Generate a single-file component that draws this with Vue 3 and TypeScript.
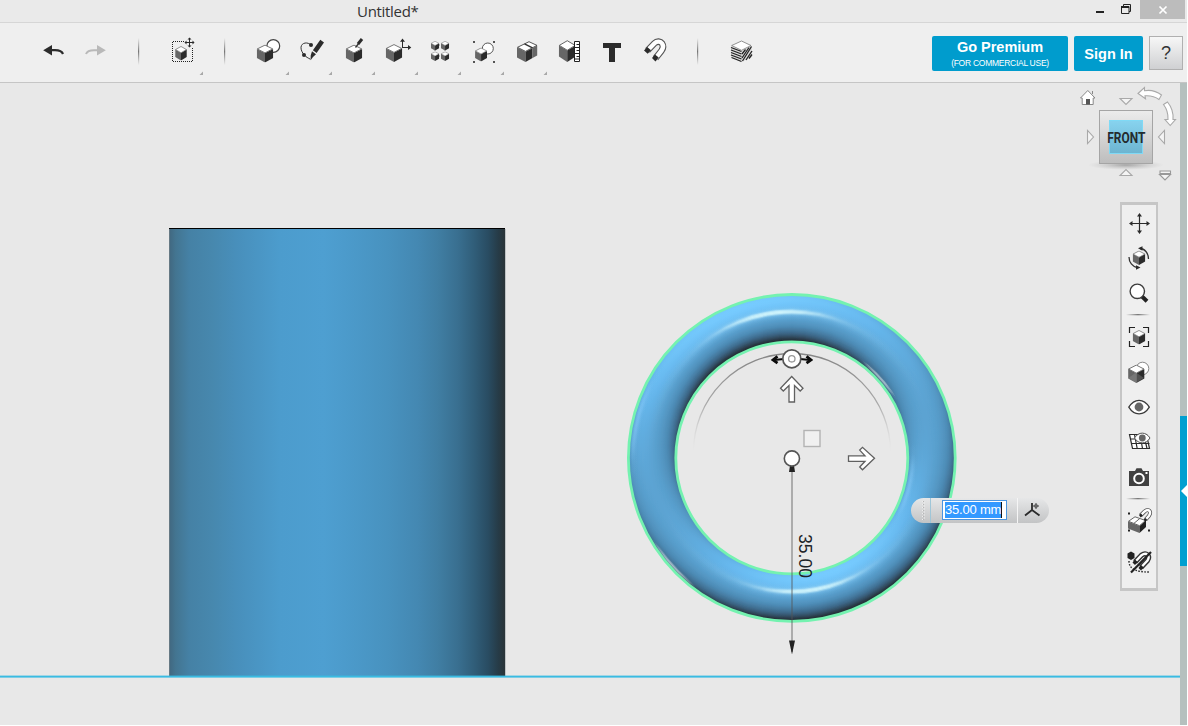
<script setup lang="ts">
interface Slot { id: string; x: number; menu?: boolean }
interface NavItem { id: string; y: number; h: number }
interface Stop { o: number; c: string; a: number }
interface Ring { id: string; r: number; x1: number; y1: number; x2: number; y2: number; stops: Stop[] }

const slots: Slot[] = [
  { id: 'undo', x: 32 }, { id: 'redo', x: 75 }, { id: 'sep', x: 118 },
  { id: 'select', x: 161, menu: true }, { id: 'sep', x: 204 },
  { id: 'primitives', x: 247, menu: true }, { id: 'sketch', x: 290, menu: true },
  { id: 'construct', x: 333, menu: true }, { id: 'modify', x: 376, menu: true },
  { id: 'pattern', x: 419, menu: true }, { id: 'group', x: 462, menu: true },
  { id: 'combine', x: 505, menu: true }, { id: 'measure', x: 548 },
  { id: 'text', x: 591 }, { id: 'snap', x: 634 }, { id: 'sep', x: 677 }, { id: 'material', x: 720 },
]

const navItems: NavItem[] = [
  { id: 'pan', y: 205, h: 36 }, { id: 'orbit', y: 241, h: 35 }, { id: 'zoom', y: 276, h: 35 },
  { id: 'sep', y: 311, h: 8 }, { id: 'fit', y: 319, h: 36 }, { id: 'shade', y: 355, h: 34 },
  { id: 'eye', y: 389, h: 36 }, { id: 'grid', y: 425, h: 34 }, { id: 'camera', y: 459, h: 36 },
  { id: 'sep', y: 495, h: 8 }, { id: 'snapgroup', y: 503, h: 38 }, { id: 'nosnap', y: 541, h: 42 },
]

// Torus shading: concentric rings, each lit through a gradient along the light axis.
const CX = 791.8, CY = 457.9, MID = 139.8, TUBE = 24
type RGB = [number, number, number]
const ramp: [number, RGB][] = [
  [-1, [26, 27, 29]], [-0.6, [33, 37, 41]], [-0.35, [42, 58, 71]], [0, [61, 105, 138]],
  [0.3, [77, 139, 181]], [0.6, [91, 163, 210]], [0.8, [102, 183, 237]], [1, [118, 203, 255]],
]
function rampColor(d: number): string {
  for (let i = 1; i < ramp.length; i++) {
    const [b, cb] = ramp[i]
    const [a, ca] = ramp[i - 1]
    if (d <= b || i === ramp.length - 1) {
      const t = Math.max(0, Math.min(1, (d - a) / (b - a)))
      return `rgb(${ca.map((v, k) => Math.round(v + (cb[k] - v) * t)).join(',')})`
    }
  }
  return '#5ca7d7'
}
function buildRings(name: string, axis: [number, number], shade: (s: number, z: number, c: number) => Omit<Stop, 'o'>, n = 20): Ring[] {
  const out: Ring[] = []
  const len = Math.hypot(axis[0], axis[1])
  const ux = axis[0] / len, uy = axis[1] / len
  for (let i = 47; i >= 0; i--) {
    const r = MID - TUBE + 0.5 + i
    const s = (r - MID) / TUBE
    const z = Math.sqrt(Math.max(0, 1 - s * s))
    const stops: Stop[] = []
    for (let k = 0; k <= n; k++) {
      const c = -1 + (2 * k) / n
      stops.push({ o: k / n, ...shade(s, z, c) })
    }
    out.push({ id: `${name}${i}`, r, x1: CX - ux * r, y1: CY - uy * r, x2: CX + ux * r, y2: CY + uy * r, stops })
  }
  return out
}
const bodyRings = buildRings('d', [-0.3, -0.954], (s, z, c) => ({ c: rampColor(s * c * 0.8 + z * 0.6), a: 1 }))
const glossRings: Ring[] = [
  ...buildRings('h', [-0.13, -0.99], (s, z, c) => {
    const d = Math.max(0, s * c * 0.26 + z * 0.9656)
    const side = Math.min(1, Math.abs(c) * 1.1)
    return { c: '#e2ffff', a: Math.min(1, Math.pow(d, 360) * 1.2 * side + Math.pow(d, 60) * 0.14 * side) }
  }, 60),
  ...buildRings('g', [-0.74, 0.67], (s, z, c) => {
    const d = Math.max(0, s * c * 0.87 + z * 0.49)
    return { c: '#ffffff', a: Math.min(1, Math.pow(d, 420) * 1.6) }
  }, 120),
  ...buildRings('k', [-0.97, -0.24], (s, z, c) => {
    const d = Math.max(0, s * c * 0.8 + z * 0.6)
    return { c: '#8ccfff', a: Math.pow(d, 90) * 0.5 }
  }, 60),
]
const allRings = [...bodyRings, ...glossRings]
const annulus = [163.6, 116].map(r => `M${CX - r} ${CY}a${r} ${r} 0 1 0 ${2 * r} 0a${r} ${r} 0 1 0 ${-2 * r} 0z`).join('')
</script>

<template>
  <div class="app">
    <svg class="defs" width="0" height="0">
      <symbol id="cube" viewBox="0 0 17 18" preserveAspectRatio="none">
        <path d="M.4 4.4 8.5 8.6V18L.4 13.6Z" fill="#666" />
        <path d="M16.6 4.4 8.5 8.6V18l8.1-4.4Z" fill="#2b2b2b" />
        <path d="M8.5.6 16.2 4.4 8.5 8.4.8 4.4Z" fill="#fff" stroke="#555" stroke-width=".8" />
      </symbol>
      <linearGradient id="sepV" x1="0" y1="0" x2="0" y2="1">
        <stop offset="0" stop-color="#777" stop-opacity="0" /><stop offset=".5" stop-color="#777" /><stop offset="1" stop-color="#777" stop-opacity="0" />
      </linearGradient>
      <linearGradient id="sepH" x1="0" y1="0" x2="1" y2="0">
        <stop offset="0" stop-color="#777" stop-opacity="0" /><stop offset=".5" stop-color="#777" /><stop offset="1" stop-color="#777" stop-opacity="0" />
      </linearGradient>
    </svg>

    <header class="titlebar">
      <span class="title">Untitled*</span>
      <div class="winbtns">
        <svg width="54" height="20" viewBox="1086 0 54 20">
          <path d="M1096 11h8v2h-8z" fill="#222" />
          <path d="M1123.500 6V4.500h7v7H1129" fill="none" stroke="#222" />
          <path d="M1121.500 6.500h7.500v7h-7.500z" fill="none" stroke="#222" /><path d="M1121 6h8v2h-8z" fill="#222" />
        </svg>
        <div class="close">
          <svg width="10" height="10" viewBox="0 0 10 10"><path d="M1.500 1.500l7 7M8.500 1.500l-7 7" stroke="#fff" stroke-width="1.700" /></svg>
        </div>
      </div>
    </header>

    <div class="toolbar">
      <nav class="tools">
        <svg v-for="s in slots" :key="s.id + s.x" width="43" height="59" :viewBox="`${s.x} 23 43 59`">
          <path v-if="s.menu" :d="`M${s.x + 42} 71.500v3.500h-3.500z`" fill="#a8a8a8" />
          <rect v-if="s.id === 'sep'" :x="s.x + 20" y="38" width="1.200" height="27" fill="url(#sepV)" />
          <g v-else-if="s.id === 'undo'">
            <path d="M43.200 50.300 52 45v10.600z" fill="#2b2b2b" /><path d="M51 50.200h4c4 0 7 1.200 8 3.800" fill="none" stroke="#2b2b2b" stroke-width="2.200" />
          </g>
          <g v-else-if="s.id === 'redo'">
            <path d="M105.800 50.300 97 45v10.600z" fill="#b9b9b9" /><path d="M98 50.200h-4c-4 0-7 1.200-8 3.800" fill="none" stroke="#b9b9b9" stroke-width="2" />
          </g>
          <g v-else-if="s.id === 'select'">
            <path d="M184 41.500H172.500V61.500H192.500V48" fill="none" stroke="#222" stroke-dasharray="1 1" />
            <use href="#cube" x="175" y="46" width="12" height="14.500" />
            <path d="M189.500 38.500v8M185.500 42.500h8" stroke="#2b2b2b" />
            <path d="M189.500 37.500l2 2h-4zM189.500 47.500l2-2h-4zM184.500 42.500l2-2v4zM194.500 42.500l-2-2v4z" fill="#2b2b2b" />
          </g>
          <g v-else-if="s.id === 'primitives'">
            <circle cx="273.300" cy="46" r="6.400" fill="#fff" stroke="#444" stroke-width="1.200" /><use href="#cube" x="256.500" y="44.500" width="17" height="18" />
          </g>
          <g v-else-if="s.id === 'sketch'">
            <path d="M311 45.200c-3-3.600-9.500-2.800-10 2-.2 2.600 1.300 5.600 3.300 7.800 1.500 2 4 3 6 4.200" fill="none" stroke="#333" />
            <circle cx="311" cy="45" r="2" fill="#2b2b2b" /><circle cx="304" cy="55" r="2" fill="#2b2b2b" />
            <path d="M320.300 39.800 324 42.600 316.600 52.900 312.900 50.200zM312 51.200l4 3-3 2.700-2.400 3.300.1-4.600z" fill="#2b2b2b" />
          </g>
          <g v-else-if="s.id === 'construct'">
            <use href="#cube" x="345.500" y="44.500" width="17" height="18" /><path d="M355.500 47.500l3.500-4.500" stroke="#333" stroke-width="1.300" /><path d="M358 44l4-5" stroke="#2b2b2b" stroke-width="3" />
          </g>
          <g v-else-if="s.id === 'modify'">
            <use href="#cube" x="385.500" y="44" width="17" height="18" />
            <path d="M402.500 48V40M402.500 47.500H409" fill="none" stroke="#2b2b2b" /><path d="M402.500 38.500l2.500 3.300h-5zM411.300 47.500l-3.300-2.500v5z" fill="#2b2b2b" />
          </g>
          <g v-else-if="s.id === 'pattern'">
            <path d="M435 50v3M445 50v3M439 45h2M439 56h2" stroke="#888" stroke-dasharray="1 1" />
            <use href="#cube" x="430.800" y="41" width="8.500" height="9.500" /><use href="#cube" x="440.800" y="41" width="8.500" height="9.500" />
            <use href="#cube" x="430.800" y="51.500" width="8.500" height="9.500" /><use href="#cube" x="440.800" y="51.500" width="8.500" height="9.500" />
          </g>
          <g v-else-if="s.id === 'group'">
            <path d="M473 41h2v2h-2zM493 41h2v2h-2zM473 61h2v2h-2zM493 61h2v2h-2z" fill="#555" />
            <circle cx="487.800" cy="48.500" r="5.500" fill="#fff" stroke="#555" /><use href="#cube" x="474.800" y="47.500" width="12.500" height="14" />
          </g>
          <g v-else-if="s.id === 'combine'">
            <path d="M517 47.500l8.500 4.300V62l-8.500-4.500z" fill="#666" /><path d="M525.500 51.800l7-3.600v9.800l-7 4z" fill="#2b2b2b" /><path d="M532.500 48.200l4.700-2.700v10l-4.700 2.500z" fill="#666" />
            <path d="M517.500 47.300l11.500-5.600 8 3.700-11.500 6z" fill="#fff" stroke="#444" stroke-width=".9" /><path d="M524.500 43.800l8 4" fill="none" stroke="#333" stroke-width="1.300" />
          </g>
          <g v-else-if="s.id === 'measure'">
            <use href="#cube" x="558.500" y="40" width="17.500" height="22" />
            <path d="M574.500 41.500h5v20h-5z" fill="#fff" stroke="#222" /><path d="M576.500 44.500h3M575 47.500h4M576.500 50.500h3M575 53.500h4M576.500 56.500h3M575 59h4" stroke="#222" />
          </g>
          <path v-else-if="s.id === 'text'" d="M603 43h18v5h-6v14h-6v-14h-6z" fill="#2b2b2b" />
          <g v-else-if="s.id === 'snap'" fill="none">
            <path d="M647.500 50.500l7-7.200c2.500-2.600 6-2 7.600.2 1.500 2.200 1.200 4.600-.6 7.200l-6 7.600" stroke="#555" stroke-width="6.600" /><path d="M647.500 50.500l7-7.200c2.500-2.600 6-2 7.600.2 1.500 2.200 1.200 4.600-.6 7.200l-6 7.600" stroke="#fff" stroke-width="4.400" />
            <path d="M644 50.500l3.200-3.500 3.800 3.300-3.300 3.500zM652 58l3-3.500 3.700 3-3.200 4z" fill="#2b2b2b" />
          </g>
          <g v-else-if="s.id === 'material'" fill="none">
            <path d="M731 45.500l10.500 5v12l-10.500-5.500zM741.500 50.500l10.500-5v11.500l-10.500 5z" fill="#ddd" />
            <path d="M731 47.500l10.500 4M731 50l10.500 4M731 52.500l10.500 4M731 55l10.500 4M731.500 57.500l10 4" stroke="#222" stroke-width="1.300" />
            <path d="M742 54l3.500-4.500M742 58l7-10.500M742.500 61l9-14.500M746 60l6-9M749 58.500l3-4" stroke="#222" stroke-width="1.300" />
            <path d="M741.500 41 751 45.500l-9.500 4.800-9.800-4.800z" fill="#fff" stroke="#777" stroke-width=".8" />
          </g>
        </svg>
      </nav>
      <div class="actions">
        <button class="btn premium"><b>Go Premium</b><small>(FOR COMMERCIAL USE)</small></button>
        <button class="btn signin">Sign In</button>
        <button class="help">?</button>
      </div>
    </div>

    <main class="viewport">
      <svg class="scene" width="1180" height="643" viewBox="0 83 1180 643">
        <defs>
          <linearGradient id="cyl" x1="0" x2="1" y1="0" y2="0">
            <stop offset="0" stop-color="#41677f" /><stop offset=".02" stop-color="#437591" /><stop offset=".06" stop-color="#4581a5" />
            <stop offset=".13" stop-color="#4788ae" /><stop offset=".2" stop-color="#488fbb" /><stop offset=".33" stop-color="#4c9ccd" />
            <stop offset=".46" stop-color="#4e9fd1" /><stop offset=".55" stop-color="#4b99c9" /><stop offset=".65" stop-color="#4892bf" />
            <stop offset=".74" stop-color="#4488b2" /><stop offset=".8" stop-color="#407ea3" /><stop offset=".86" stop-color="#396f90" />
            <stop offset=".91" stop-color="#305d78" /><stop offset=".95" stop-color="#294c62" /><stop offset=".98" stop-color="#263b47" /><stop offset="1" stop-color="#2a3438" />
          </linearGradient>
          <linearGradient id="arcFade" gradientUnits="userSpaceOnUse" x1="0" y1="358" x2="0" y2="452">
            <stop offset="0" stop-color="#888" /><stop offset=".5" stop-color="#aaa" /><stop offset="1" stop-color="#ddd" stop-opacity="0" />
          </linearGradient>
          <linearGradient id="face" x1="0" y1="0" x2="0" y2="1"><stop offset="0" stop-color="#ececec" /><stop offset="1" stop-color="#bdbdbd" /></linearGradient>
          <linearGradient id="faceBlue" x1="0" y1="0" x2="0" y2="1"><stop offset="0" stop-color="#87d3ef" /><stop offset="1" stop-color="#6db4d0" /></linearGradient>
          <radialGradient id="shadow"><stop offset="0" stop-color="#777" stop-opacity=".6" /><stop offset="1" stop-color="#aaa" stop-opacity="0" /></radialGradient>
          <clipPath id="annulus"><path :d="annulus" clip-rule="evenodd" /></clipPath>
          <filter id="smooth" x="-5%" y="-5%" width="110%" height="110%"><feGaussianBlur stdDeviation=".6" /></filter>
          <linearGradient v-for="g in allRings" :id="g.id" :key="g.id" gradientUnits="userSpaceOnUse" :x1="g.x1" :y1="g.y1" :x2="g.x2" :y2="g.y2">
            <stop v-for="(p, k) in g.stops" :key="k" :offset="p.o" :stop-color="p.c" :stop-opacity="p.a" />
          </linearGradient>
        </defs>

        <rect x="169" y="228" width="336" height="448" fill="url(#cyl)" />
        <path d="M169.500 228v448" stroke="#667984" /><path d="M505.500 229v447" stroke="#bfc3c5" /><path d="M169 228.500h336" stroke="#000" />
        <rect x="0" y="675.600" width="1180" height="2" fill="#3abbe2" />

        <g clip-path="url(#annulus)">
          <g filter="url(#smooth)">
            <circle v-for="g in bodyRings" :key="g.id" :cx="CX" :cy="CY" :r="g.r + 0.5" :fill="`url(#${g.id})`" />
            <g fill="none" stroke-width="2" stroke-opacity=".62">
              <circle v-for="g in glossRings" :key="g.id" :cx="CX" :cy="CY" :r="g.r" :stroke="`url(#${g.id})`" />
            </g>
          </g>
        </g>
        <g fill="none" stroke="#74f2b0" stroke-width="2.800"><circle :cx="CX" :cy="CY" r="163.400" /><circle :cx="CX" :cy="CY" r="116" /></g>

        <path d="M693.500 452A98.500 98.500 0 0 1 890.500 452" fill="none" stroke="url(#arcFade)" stroke-width="1.300" />
        <g fill="none" stroke="#0c0c0c"><path d="M774 360l10-1M810 360l-10-1" stroke-width="2" /><path d="M777.500 356.300l-4.500 3.700 4.500 3.200M806.500 356.300l4.500 3.700-4.500 3.200" stroke-width="2.800" /></g>
        <circle cx="791.800" cy="358.800" r="9" fill="#fff" stroke="#555" stroke-width="1.700" /><circle cx="791.800" cy="358.800" r="3.200" fill="#fff" stroke="#999" stroke-width="1.300" />
        <path d="M791.700 376.500l11.300 11.700-2.800 2.800-5.700-5.500V402h-5.500v-16.500l-5.700 5.500-2.800-2.800z" fill="#fff" stroke="#606060" stroke-width="1.300" />
        <path d="M874.500 458.300l-12 11.500-2.800-2.800 5.300-5.700h-16.500v-5.500H865l-5.300-5.700 2.800-2.800z" fill="#fff" stroke="#606060" stroke-width="1.300" />
        <rect x="804" y="430.500" width="16" height="16" fill="#f0f0f0" stroke="#b3b3b3" stroke-width="1.400" />
        <path d="M792 470v182" stroke="#555" stroke-opacity=".45" stroke-width="1.800" />
        <path d="M790 465.500h4l1 6.500h-6zM789 640.500h6l-3 14z" fill="#222" />
        <circle cx="791.900" cy="458.500" r="7.600" fill="#fff" stroke="#555" stroke-width="1.600" />
        <text class="dim" transform="translate(799 534) rotate(90)" textLength="44" lengthAdjust="spacingAndGlyphs">35.00</text>

        <!-- orientation cube -->
        <ellipse cx="1126" cy="165" rx="38" ry="5" fill="url(#shadow)" />
        <rect x="1099.500" y="110.500" width="53" height="53" fill="url(#face)" stroke="#a5a5a5" />
        <rect x="1109.500" y="120.500" width="33" height="33" fill="url(#faceBlue)" stroke="#7fd9f5" />
        <text class="front" x="1107.300" y="142.700" textLength="38" lengthAdjust="spacingAndGlyphs">FRONT</text>
        <g fill="#f4f4f4" stroke="#a9a9a9" stroke-width="1.100">
          <path d="M1120 98.500h12l-6 6zM1120 175.500h12l-6-6zM1087.500 130.500v13l6-6.500zM1164.500 130.500v13l-6-6.500z" />
          <path d="M1159.500 174.500h11l-5.500 5.500zM1160 171h10.500v2.500H1160z" stroke="#999" />
          <path d="M1138 93.500l6.500-6v3.200c7-1.200 12.500.8 17 4.300l-2.500 4.500c-4-3-9-4-14-3.700l.5 3z" fill="#fff" />
          <path d="M1163.500 104.500l4-2.500c4.500 5.500 6 11.500 5.500 17.500h2.500l-5.300 6-5.200-6h3c.3-6-1-10.500-4.500-15z" fill="#fff" />
        </g>
        <path d="M1080.500 98l7.300-7.500 7.200 7.500h-1.800v6.500h-11V98z" fill="#fff" stroke="#888" /><path d="M1086 99h4v5.500h-4z" fill="#555" /><path d="M1092.500 91v3" stroke="#888" />
      </svg>

      <div class="pill">
        <svg class="grip" width="19" height="25" viewBox="911 498 19 25"><path d="M922.500 501v20M924.500 502.500v18" stroke="#eee" stroke-dasharray="1 2" /><path d="M923.500 501v20" stroke="#b5b5b5" stroke-dasharray="1 2" /></svg>
        <div class="field"><div class="box"><span class="sel">35.00 mm</span></div></div>
        <svg width="31" height="25" viewBox="1018 498 31 25"><path d="M1032 503v7l-7 5.500M1032 510l7.500 5.500" fill="none" stroke="#2b2b2b" stroke-width="1.800" /><path d="M1036 503v6M1033 506h6" stroke="#444" /><circle cx="1036" cy="506" r="1.700" fill="none" stroke="#555" stroke-width=".7" /></svg>
      </div>

      <aside class="navbar">
        <svg v-for="n in navItems" :key="n.id + n.y" width="34" :height="n.h" :viewBox="`1122 ${n.y} 34 ${n.h}`">
          <rect v-if="n.id === 'sep'" x="1126" :y="n.y + 3" width="24" height="1.300" fill="url(#sepH)" />
          <g v-else-if="n.id === 'pan'">
            <path d="M1139.500 215v17M1131 223.500h17" stroke="#2b2b2b" stroke-width="1.200" /><path d="M1139.500 213l2.500 3.500h-5zM1139.500 234l2.500-3.500h-5zM1129 223.500l3.500-2.500v5zM1150 223.500l-3.500-2.500v5z" fill="#2b2b2b" />
          </g>
          <g v-else-if="n.id === 'orbit'">
            <use href="#cube" x="1132.500" y="250.500" width="13" height="14.500" />
            <path d="M1140 248.500c4.500 0 8.500 4.500 8.500 10.500M1137 267.500c-4.500-1-8-5-8-10.500" fill="none" stroke="#333" stroke-width="1.300" /><path d="M1138 248.300l4.500-2v4.500zM1140.500 267.600l-4.500-2.300v4.500z" fill="#2b2b2b" />
          </g>
          <g v-else-if="n.id === 'zoom'">
            <path d="M1142 296.500l5 4.700" stroke="#222" stroke-width="4" /><circle cx="1137.300" cy="291.300" r="7.200" fill="#fff" stroke="#3c3c3c" stroke-width="1.400" />
          </g>
          <g v-else-if="n.id === 'fit'">
            <use href="#cube" x="1132.500" y="330" width="13" height="14.500" /><path d="M1129.500 333v-5.500h5.500M1143 327.500h5.500v5.500M1129.500 341v5.500h5.500M1143 346.500h5.500V341" fill="none" stroke="#222" stroke-width="1.200" />
          </g>
          <g v-else-if="n.id === 'shade'">
            <circle cx="1142.500" cy="368.500" r="6.300" fill="#fff" stroke="#888" /><use href="#cube" x="1127.800" y="364.500" width="17" height="18.500" />
            <path d="M1128.500 378l7.500-5.500 8 5.500-8 4.800z" fill="#999" opacity=".35" />
          </g>
          <g v-else-if="n.id === 'eye'">
            <path d="M1128.800 407.200c5.500-9.200 15-9.200 20.500 0-5.500 9-15 9-20.500 0z" fill="#fff" stroke="#3a3a3a" stroke-width="1.300" /><circle cx="1139" cy="407" r="4.400" fill="#666" />
          </g>
          <g v-else-if="n.id === 'grid'">
            <path d="M1129.500 434.500h17l3 14h-17zM1130.300 439h18M1131 443.500h18.500M1134.500 434.500l2.700 14M1140 434.500l2.500 14M1145 440l2 8.500" fill="#fff" stroke="#2b2b2b" stroke-width="1.200" />
            <path d="M1134.500 438c4-6.500 11.500-6.500 15.500 0-4 6.500-11.500 6.500-15.500 0z" fill="#fff" stroke="#555" /><circle cx="1142.300" cy="438" r="3.400" fill="#666" />
          </g>
          <g v-else-if="n.id === 'camera'">
            <path d="M1129 471h6l1.500-2.700h5L1143 471h6v15h-20z" fill="#404040" /><circle cx="1139" cy="478.500" r="4.800" fill="#404040" stroke="#fff" stroke-width="2" /><path d="M1145.500 472h2v2h-2z" fill="#fff" />
          </g>
          <g v-else-if="n.id === 'snapgroup'">
            <path d="M1128 512.500h2v2h-2zM1128 529.500h2v2h-2zM1148 529.500h2v2h-2z" fill="#222" />
            <path d="M1128 521.500l11.500 4.500v7l-11.500-4.500z" fill="#666" /><path d="M1139.500 526l6.500-6v7l-6.500 6z" fill="#222" /><path d="M1128.500 521.300l6.500-4.500 10.500 3.700-6 5.200z" fill="#fff" stroke="#555" stroke-width=".9" /><path d="M1134 523.300l6-5" stroke="#666" fill="none" />
            <path d="M1140.500 515.500l4-4c4.500-3.500 7 .5 4.500 4.200l-3.500 4" fill="none" stroke="#555" stroke-width="4" /><path d="M1140.500 515.500l4-4c4.500-3.500 7 .5 4.500 4.200l-3.500 4" fill="none" stroke="#fff" stroke-width="2.400" /><path d="M1139 515l2-1.500 1.700 2-2 2zM1143.700 519.500l2-1.500 1.500 2-2 1.800z" fill="#222" />
          </g>
          <g v-else>
            <path d="M1129 561c0 7 5 11 20 11" fill="none" stroke="#222" stroke-width="1.400" stroke-dasharray="1.500 1.500" />
            <path d="M1135 562l6.500-6.800c5-3.500 9 1 6 5.300l-6.500 7" fill="none" stroke="#333" stroke-width="5.200" /><path d="M1135 562l6.500-6.800c5-3.500 9 1 6 5.300l-6.500 7" fill="none" stroke="#fff" stroke-width="2.400" />
            <path d="M1132.500 562.500l2.500-3 2.700 2.500-2.700 3zM1138.500 568l2.500-3 2.700 2.500-2.700 3zM1127.500 553.500l3.500-2 3.500 2v4.500l-3.500 2-3.500-2z" fill="#222" />
            <path d="M1131 572.500l20-20.500" stroke="#222" stroke-width="2.200" />
          </g>
        </svg>
      </aside>

      <div class="edge">
        <div class="panel-tab"><svg width="7" height="14" viewBox="0 0 7 14"><path d="M7 1v12L1 7z" fill="#fff" /></svg></div>
      </div>
    </main>
  </div>
</template>

<style>
body { background: #fff; }
</style>

<style scoped>
.app { width: 1187px; height: 725px; overflow: hidden; background: #e8e8e8; font-family: "Liberation Sans", Arial, sans-serif; display: flex; flex-direction: column; }
.defs { position: absolute; }
svg { display: block; flex: none; }
.titlebar { height: 22px; background: #eaeaea; border-bottom: 1px solid #d6d6d6; display: flex; justify-content: space-between; flex: none; }
.title { font: 15px/22px "Open Sans", sans-serif; letter-spacing: -.3px; color: #333; padding-left: 357px; }
.winbtns { display: flex; padding-right: 2px; }
.close { width: 45px; height: 19px; background: #bcbcbc; display: flex; align-items: center; justify-content: center; }
.toolbar { height: 59px; background: #efefef; border-bottom: 1px solid #c5c5c5; display: flex; justify-content: space-between; flex: none; }
.tools { display: flex; padding-left: 32px; }
.actions { display: flex; gap: 6px; padding: 13px 4px 0 0; }
.btn { border: 0; padding: 0; height: 35px; border-radius: 2px; background: #009ccd; color: #fff; font: bold 14.500px/18px "Liberation Sans", Arial, sans-serif; }
.premium { width: 136px; display: flex; flex-direction: column; align-items: center; padding-top: 2px; }
.premium small { font: 8.500px/14px "Liberation Sans", Arial, sans-serif; letter-spacing: -.27px; }
.signin { width: 69px; }
.help { width: 34px; height: 34px; padding: 0; border: 1px solid #b0b0b0; background: linear-gradient(#f7f7f7, #cfd0d2); font: 18px/30px "Liberation Sans", Arial, sans-serif; color: #333; }
.viewport { position: relative; flex: 1; display: flex; justify-content: flex-end; }
.scene { position: absolute; left: 0; top: 0; }
.dim { font: 18.500px "Liberation Sans", Arial, sans-serif; fill: #1c2226; }
.front { font: bold 15px Roboto, sans-serif; fill: #252b2e; }
.pill { position: absolute; left: 911px; top: 415px; width: 138px; height: 25px; border-radius: 13px; overflow: hidden; display: flex; background: linear-gradient(#e6e7e8, #c3c4c5); }
.field { width: 75px; border-left: 1px solid #9fc6d8; border-right: 1px solid #f5f5f5; padding: 2px 0 0 11px; }
.box { width: 65px; height: 20px; box-sizing: border-box; border: 1px solid #4b95e0; background: #fff; padding: 1px 2px; }
.sel { display: block; width: 56px; height: 16px; background: #3399ff; border-right: 1px solid #111; color: #fff; font-size: 13px; letter-spacing: -.2px; line-height: 16px; white-space: nowrap; }
.navbar { width: 34px; height: 383px; margin: 119px 22px 0 0; border: solid #c6c6c6; border-width: 3px 2px; background: #efefef; }
.edge { width: 7px; background: #b5c0be; padding-top: 333px; }
.panel-tab { height: 150px; background: #009fd0; display: flex; align-items: center; }
</style>
